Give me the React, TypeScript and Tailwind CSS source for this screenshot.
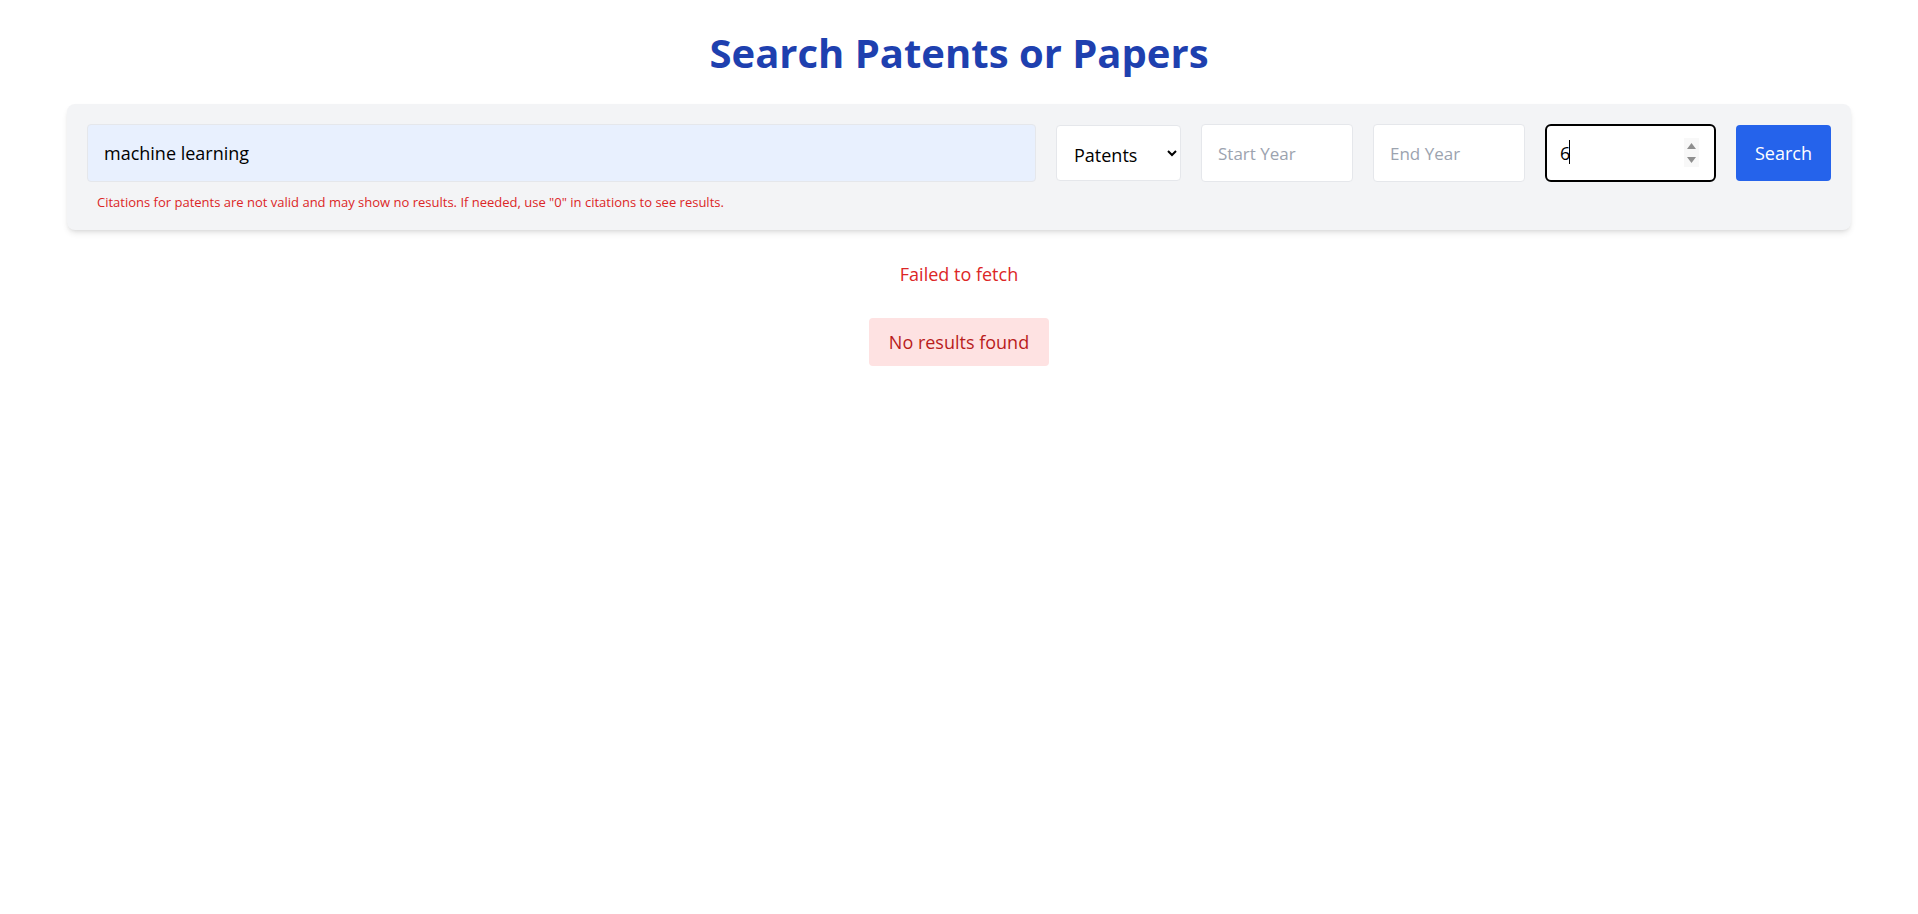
import { useState } from "react";

export default function App() {
  const [query, setQuery] = useState("machine learning");
  const [source, setSource] = useState("patents");
  const [startYear, setStartYear] = useState("");
  const [endYear, setEndYear] = useState("");
  const [citations, setCitations] = useState("6");

  return (
    <div className="min-h-screen bg-white font-['Open_Sans','Liberation_Sans',sans-serif] text-base text-black">
      <div className="mx-auto w-[1784px] pt-[33px]">
        <h1 className="mb-[31px] text-center text-[40px] font-bold leading-none text-[#1e40af]">
          Search Patents or Papers
        </h1>

        <div className="rounded-lg bg-[#f3f4f6] p-5 shadow-md">
          <div className="flex items-center gap-5">
            <input
              type="text"
              value={query}
              onChange={(e) => setQuery(e.target.value)}
              placeholder="Search..."
              className="h-[58px] flex-1 rounded border border-[#e5e7eb] bg-[#e8f0fe] p-4 text-[18px] text-black outline-none"
            />

            <select
              value={source}
              onChange={(e) => setSource(e.target.value)}
              className="h-[56px] w-[125px] rounded border border-[#e5e7eb] bg-white pl-[13px] pr-2 pt-[3px] text-[18px] text-black outline-none"
            >
              <option value="patents">Patents</option>
              <option value="papers">Papers</option>
            </select>

            <input
              type="text"
              value={startYear}
              onChange={(e) => setStartYear(e.target.value)}
              placeholder="Start Year"
              className="h-[58px] w-[152px] rounded border border-[#e5e7eb] bg-white p-4 text-[17px] outline-none placeholder:text-[#9ca3af]"
            />

            <input
              type="text"
              value={endYear}
              onChange={(e) => setEndYear(e.target.value)}
              placeholder="End Year"
              className="h-[58px] w-[152px] rounded border border-[#e5e7eb] bg-white p-4 text-[17px] outline-none placeholder:text-[#9ca3af]"
            />

            <div className="relative h-[58px] w-[171px]">
              <input
                type="text"
                value={citations}
                onChange={(e) => setCitations(e.target.value)}
                placeholder="Min Citations"
                className="h-full w-full rounded-md border-2 border-black bg-white pl-[13px] pr-8 text-[18px] outline-none"
              />
              {/* caret */}
              <span className="pointer-events-none absolute left-[24px] top-[16px] h-[24px] w-px bg-black" />
              {/* number spinner */}
              <div className="pointer-events-none absolute right-[17px] top-[14px] flex h-[29px] w-[15px] flex-col items-center justify-center gap-[8px] bg-[#f8f8f8]">
                <svg width="9" height="6" viewBox="0 0 9 6">
                  <path d="M4.5 0L9 6H0z" fill="#8f8f8f" />
                </svg>
                <svg width="9" height="6" viewBox="0 0 9 6">
                  <path d="M0 0h9L4.5 6z" fill="#8f8f8f" />
                </svg>
              </div>
            </div>

            <button className="h-[56px] w-[95px] rounded bg-[#2563eb] text-[18px] text-white">
              Search
            </button>
          </div>

          <p className="ml-2.5 mt-3 text-[13px] leading-4 text-[#dc2626]">
            Citations for patents are not valid and may show no results. If needed, use "0" in citations to see results.
          </p>
        </div>

        <p className="mt-8 text-center text-[18px] leading-6 text-[#dc2626]">Failed to fetch</p>

        <div className="mt-8 flex justify-center">
          <div className="rounded bg-[#fee2e2] px-5 py-3 text-[18px] leading-6 text-[#b91c1c]">
            No results found
          </div>
        </div>
      </div>
    </div>
  );
}
